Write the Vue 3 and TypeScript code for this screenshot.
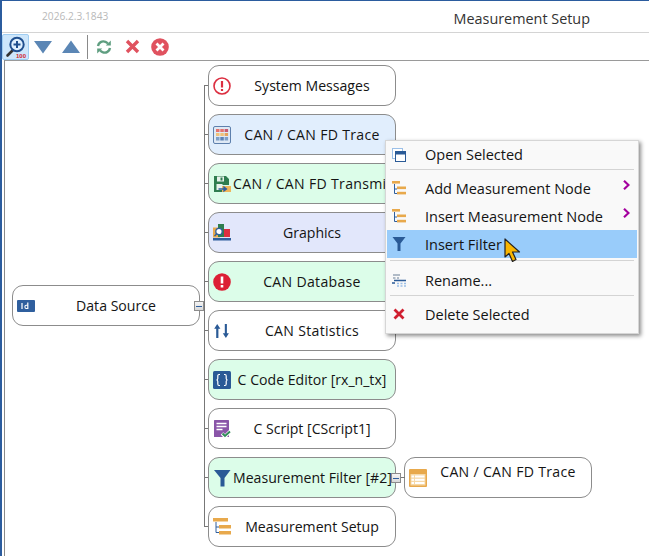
<script setup lang="ts">
type Kind = 'msg' | 'grid' | 'save' | 'graph' | 'db' | 'stats' | 'code' | 'script' | 'filter' | 'setup'
interface TreeNode { label: string; kind: Kind; tone: string }
const nodes: TreeNode[] = [
  { label: 'System Messages', kind: 'msg', tone: 'plain' },
  { label: 'CAN / CAN FD Trace', kind: 'grid', tone: 'blue' },
  { label: 'CAN / CAN FD Transmit', kind: 'save', tone: 'green' },
  { label: 'Graphics', kind: 'graph', tone: 'lilac' },
  { label: 'CAN Database', kind: 'db', tone: 'green' },
  { label: 'CAN Statistics', kind: 'stats', tone: 'plain' },
  { label: 'C Code Editor [rx_n_tx]', kind: 'code', tone: 'green' },
  { label: 'C Script [CScript1]', kind: 'script', tone: 'plain' },
  { label: 'Measurement Filter [#2]', kind: 'filter', tone: 'green' },
  { label: 'Measurement Setup', kind: 'setup', tone: 'plain' },
]
</script>

<template>
  <div class="win">
    <header class="title">
      <span class="version">2026.2.3.1843</span>
      <span class="name">Measurement Setup</span>
    </header>
    <div class="toolbar">
      <button class="tool active">
        <svg width="22" height="22" viewBox="0 0 22 22">
          <path d="M8 14L2.500 19.500" stroke="#333" stroke-width="2.600" stroke-linecap="round" />
          <circle cx="12" cy="8.500" r="6.700" fill="#dff0ff" stroke="#1f4f8f" stroke-width="2" />
          <path d="M12 5v7M8.500 8.500h7" stroke="#1f4f8f" stroke-width="2" />
          <text x="11" y="21.500" class="hundred">100</text>
        </svg>
      </button>
      <span class="tool"><svg width="18" height="14" viewBox="0 0 18 14"><path d="M0 1h18L9 13.500z" fill="#5b86b5" /></svg></span>
      <span class="tool"><svg width="18" height="14" viewBox="0 0 18 14"><path d="M0 13h18L9 .5z" fill="#5b86b5" /></svg></span>
      <span class="divider"></span>
      <span class="tool">
        <svg width="16" height="16" viewBox="0 0 16 16" fill="none" stroke="#5f9e80" stroke-width="2.400">
          <path d="M2 7C2.500 3.500 6 1.500 9.500 2.800c1 .4 1.800 1 2.400 1.800" />
          <path d="M14 9c-.5 3.500-4 5.500-7.500 4.200-1-.4-1.800-1-2.400-1.800" />
          <path d="M14.800 1.500v5h-5z" fill="#5f9e80" stroke="none" />
          <path d="M1.200 14.500v-5h5z" fill="#5f9e80" stroke="none" />
        </svg>
      </span>
      <span class="tool"><svg width="15" height="15" viewBox="0 0 15 15"><path d="M2 2l11 11M13 2L2 13" stroke="#e0525f" stroke-width="3.400" /></svg></span>
      <span class="tool">
        <svg width="18" height="18" viewBox="0 0 18 18"><circle cx="9" cy="9" r="8.800" fill="#e0525f" /><path d="M5.500 5.500l7 7M12.500 5.500l-7 7" stroke="#fff" stroke-width="2.800" /></svg>
      </span>
    </div>

    <main class="canvas">
      <div class="node root">
        <span class="icon">
          <svg width="18" height="12" viewBox="0 0 18 12"><rect width="18" height="12" rx="1" fill="#2f5f9e" /><path d="M5 3v6M10.800 2.500V9" stroke="#fff" stroke-width="1.200" /><path d="M10.800 5.200H9.200c-1 0-1.300.8-1.300 1.500s.4 1.800 1.300 1.800h1.600" fill="none" stroke="#fff" stroke-width="1.100" /></svg>
        </span>
        <span class="label">Data Source</span>
        <span class="handle"></span>
      </div>

      <div class="tree">
        <div v-for="n in nodes" :key="n.label" class="row">
          <div class="node" :class="n.tone">
            <span class="icon">
              <svg v-if="n.kind === 'msg'" width="18" height="18" viewBox="0 0 18 18"><circle cx="9" cy="9" r="8" fill="#fff" stroke="#dc2e40" stroke-width="1.600" /><path d="M9 4v6.500M9 12v2" stroke="#dc2e40" stroke-width="2.200" /></svg>
              <svg v-else-if="n.kind === 'grid'" width="18" height="18" viewBox="0 0 18 18">
                <rect x=".5" y=".5" width="17" height="17" rx="1.500" fill="#dfe9f5" stroke="#5e80ad" />
                <rect x="3" y="3" width="3.500" height="3" fill="#e4736d" /><rect x="7.300" y="3" width="3.500" height="3" fill="#e4736d" /><rect x="11.600" y="3" width="3.500" height="3" fill="#c65a72" />
                <rect x="3" y="7" width="3.500" height="3" fill="#efc27a" /><rect x="7.300" y="7" width="3.500" height="3" fill="#efc27a" /><rect x="11.600" y="7" width="3.500" height="3" fill="#e4a25c" />
                <rect x="3" y="11" width="3.500" height="3.500" fill="#7ea0c8" /><rect x="7.300" y="11" width="3.500" height="3.500" fill="#5c82b5" /><rect x="11.600" y="11" width="3.500" height="3.500" fill="#7ea0c8" />
              </svg>
              <svg v-else-if="n.kind === 'save'" width="18" height="18" viewBox="0 0 18 18">
                <path d="M1 1h12l3 3v6H9v7H1z" fill="#2e7d4f" />
                <rect x="4" y="1.500" width="7" height="5" fill="#e8f2ec" /><rect x="7.500" y="2.500" width="2" height="3" fill="#2e7d4f" />
                <rect x="3.500" y="9" width="6" height="6" fill="#e8f2ec" />
                <rect x="9" y="11" width="9" height="6" fill="#efb65a" /><path d="M5.500 14h7M11 12l2.500 2-2.500 2z" stroke="#2f5f9e" stroke-width="1.300" fill="#2f5f9e" />
              </svg>
              <svg v-else-if="n.kind === 'graph'" width="18" height="18" viewBox="0 0 18 18">
                <rect x="0" y="3.500" width="7" height="10" fill="#e8a94c" /><rect x="5" y="0" width="6" height="13" fill="#2e7d4f" /><rect x="11" y="5" width="6" height="8" fill="#dc2e40" />
                <circle cx="6" cy="7.500" r="3.200" fill="#fff" stroke="#2f5f9e" stroke-width="1.300" /><path d="M3.500 10L1.500 12" stroke="#2f5f9e" stroke-width="1.500" />
                <rect x="0" y="14" width="18" height="2.500" fill="#2f5f9e" />
              </svg>
              <svg v-else-if="n.kind === 'db'" width="18" height="18" viewBox="0 0 18 18"><circle cx="9" cy="9" r="8.800" fill="#dc1f35" /><path d="M9 3.500v7M9 12v2.500" stroke="#fff" stroke-width="2.600" /></svg>
              <svg v-else-if="n.kind === 'stats'" width="16" height="16" viewBox="0 0 16 16" fill="#2a5a96"><path d="M3.200 1L.2 5.800h2V15h2.200V5.800h2zM10.800 1V10.200h-2l3.100 4.800 3-4.800h-2V1z" /></svg>
              <svg v-else-if="n.kind === 'code'" width="18" height="18" viewBox="0 0 18 18"><rect width="18" height="18" rx="1.500" fill="#2a5a96" /><path d="M7 3.500H6c-1 0-1.200.7-1.200 1.500v2.500c0 .8-.4 1.300-1.200 1.500.8.200 1.200.7 1.200 1.500V13c0 .8.200 1.500 1.200 1.500h1M11 3.500h1c1 0 1.200.7 1.200 1.500v2.500c0 .8.400 1.300 1.200 1.500-.8.200-1.200.7-1.200 1.500V13c0 .8-.2 1.500-1.200 1.500h-1" fill="none" stroke="#fff" stroke-width="1.200" /></svg>
              <svg v-else-if="n.kind === 'script'" width="18" height="18" viewBox="0 0 18 18">
                <rect x="1" y="0" width="15" height="17" rx=".5" fill="#8a55a8" />
                <path d="M3.500 3.500h10M3.500 6.500h10M3.500 9.500h6" stroke="#fff" stroke-width="1.300" />
                <path d="M9 13.500l3 3 5-5" fill="none" stroke="#fff" stroke-width="3.500" /><path d="M9.500 13.500l2.500 2.500 5-4.500" fill="none" stroke="#2f8a58" stroke-width="1.900" />
              </svg>
              <svg v-else-if="n.kind === 'filter'" width="17" height="18" viewBox="0 0 17 18"><path d="M0 1h16.500L10.500 9v8.500H6.500V9z" fill="#2a5a96" /></svg>
              <svg v-else width="18" height="18" viewBox="0 0 18 18">
                <path d="M3 4v10.500h4M3 9h4" fill="none" stroke="#2f5f9e" />
                <rect x="0" y="0" width="15" height="3.500" fill="#e8a94c" /><rect x="6" y="7" width="12" height="3.500" fill="#e8a94c" /><rect x="6" y="13" width="12" height="3.500" fill="#e8a94c" />
              </svg>
            </span>
            <span class="label" :class="{ wide: n.label.startsWith('CAN') }">{{ n.label }}</span>
            <span v-if="n.kind === 'filter'" class="handle far"></span>
          </div>
          <div v-if="n.kind === 'filter'" class="node plain child">
            <span class="icon">
              <svg width="18" height="18" viewBox="0 0 18 18">
                <rect width="18" height="18" rx="1" fill="#e8a94c" /><rect x="1.500" y="5" width="15" height="11.500" fill="#f6d9a8" />
                <rect x="2.500" y="6.500" width="2.500" height="2" fill="#fff" /><rect x="6" y="6.500" width="9.500" height="2" fill="#fff" />
                <rect x="2.500" y="9.800" width="2.500" height="2" fill="#fff" /><rect x="6" y="9.800" width="9.500" height="2" fill="#fff" />
                <rect x="2.500" y="13" width="2.500" height="2" fill="#fff" /><rect x="6" y="13" width="9.500" height="2" fill="#fff" />
              </svg>
            </span>
            <span class="label up wide">CAN / CAN FD Trace</span>
          </div>
        </div>
      </div>
    </main>

    <nav class="menu">
      <div class="item open">
        <svg width="14" height="14" viewBox="0 0 14 14"><rect x=".5" y=".5" width="10" height="10" fill="#fff" stroke="#9cc0e8" /><rect x="3.500" y="3.500" width="10" height="10" fill="#fff" stroke="#2a5a96" /><rect x="3" y="3" width="11" height="3.500" fill="#2a5a96" /></svg>
        <span>Open Selected</span>
      </div>
      <div class="sep first"></div>
      <div class="item">
        <svg width="14" height="14" viewBox="0 0 14 14"><path d="M2.500 3v9.500H5M2.500 8H5" fill="none" stroke="#2f5f9e" /><rect y="0" width="8" height="2.600" fill="#e8a94c" /><rect x="5" y="5.500" width="9" height="2.600" fill="#e8a94c" /><rect x="5" y="10.800" width="9" height="2.600" fill="#e8a94c" /></svg>
        <span>Add Measurement Node</span>
        <svg class="chev" width="7" height="10" viewBox="0 0 7 10"><path d="M1 .8L5.500 5 1 9.200" fill="none" stroke="#a4009e" stroke-width="2.200" /></svg>
      </div>
      <div class="item">
        <svg width="14" height="14" viewBox="0 0 14 14"><path d="M2.500 3v9.500H5M2.500 8H5" fill="none" stroke="#2f5f9e" /><rect y="0" width="8" height="2.600" fill="#e8a94c" /><rect x="5" y="5.500" width="9" height="2.600" fill="#e8a94c" /><rect x="5" y="10.800" width="9" height="2.600" fill="#e8a94c" /></svg>
        <span>Insert Measurement Node</span>
        <svg class="chev" width="7" height="10" viewBox="0 0 7 10"><path d="M1 .8L5.500 5 1 9.200" fill="none" stroke="#a4009e" stroke-width="2.200" /></svg>
      </div>
      <div class="item hot">
        <svg width="14" height="14" viewBox="0 0 14 14"><path d="M.5 0h13L8.500 6.500V14h-3V6.500z" fill="#2a5a96" /></svg>
        <span>Insert Filter</span>
      </div>
      <div class="sep second"></div>
      <div class="item">
        <svg width="14" height="14" viewBox="0 0 14 14"><path d="M1 2h7M1 5h2.500M5 5h2" stroke="#6a7f96" stroke-width="1.200" /><path d="M2 7.500h12M0 10h3" stroke="#2a5a96" stroke-width="1.400" /><path d="M5 10.500h2M8.500 10.500h2M12 10.500h2M5 13h2M8.500 13h2M12 13h2" stroke="#9cc0e8" stroke-width="1.400" /></svg>
        <span>Rename...</span>
      </div>
      <div class="sep third"></div>
      <div class="item">
        <svg width="14" height="14" viewBox="0 0 14 14"><path d="M2.500 2.500l9 9M11.500 2.500l-9 9" stroke="#d01f30" stroke-width="2.800" /></svg>
        <span>Delete Selected</span>
      </div>
    </nav>

    <svg class="cursor" width="17" height="25" viewBox="0 0 17 25"><path d="M1 1v18l4-3.500 3.500 8 3.500-2-3.500-7.500H15.500z" fill="#f8b500" stroke="#222" stroke-width="1.200" stroke-linejoin="round" /></svg>
  </div>
</template>

<style>
html, body { margin: 0; background: #fff; overflow: hidden; }
</style>

<style scoped>
.win {
  position: relative;
  width: 649px;
  height: 556px;
  box-sizing: border-box;
  border-left: 2px solid #2b5c9e;
  border-top: 1px solid #2b5c9e;
  background: #fff;
  font-family: "Open Sans", "Noto Sans", sans-serif;
  color: #141414;
  font-size: 14.1px;
  overflow: hidden;
  display: flex;
  flex-direction: column;
}
.title {
  height: 31px;
  flex: none;
  box-sizing: border-box;
  display: flex;
  align-items: center;
  justify-content: space-between;
  padding: 0 59px 0 40px;
}
.version { color: #b9b9b9; font-size: 10.2px; margin-bottom: 2px; }
.name { font-size: 14.4px; color: #333; margin-top: 3px; }
.toolbar {
  height: 28px;
  flex: none;
  box-sizing: border-box;
  border-top: 1px solid #d4d4d4;
  display: flex;
  align-items: center;
}
.tool {
  width: 28px;
  height: 26px;
  box-sizing: border-box;
  display: flex;
  align-items: center;
  justify-content: center;
  flex: none;
  padding: 0;
  background: none;
  border: 0;
}
.tool.active {
  width: 27px;
  background: #cde6fb;
  border: 1px solid #9fcdf2;
  border-radius: 2px;
}
.hundred { font: bold 6px "Liberation Sans", sans-serif; fill: #d01f30; }
.divider { width: 1px; height: 24px; background: #8a8a8a; margin: 0 2px; flex: none; }
.canvas {
  flex: 1;
  min-height: 0;
  margin-left: 2px;
  border-top: 1px solid #9a9a9a;
  border-left: 1px solid #8a8a8a;
  padding: 4px 0 0 7px;
  display: flex;
  gap: 8px;
  align-items: flex-start;
}
.node {
  position: relative;
  width: 188px;
  height: 41px;
  box-sizing: border-box;
  flex: none;
  border: 1px solid #8c8c8c;
  border-radius: 11px;
  display: flex;
  align-items: center;
  padding: 0 4px;
  background: #fff;
}
.root { margin-top: 220px; }
.blue { background: #e1eefd; }
.green { background: #dcfde9; }
.lilac { background: #e2e7fb; }
.icon { width: 18px; height: 18px; flex: none; display: flex; align-items: center; justify-content: center; }
.label { flex: 1; text-align: center; white-space: nowrap; min-width: 0; padding-left: 2px; }
.label.wide { letter-spacing: 0.3px; }
.label.up { padding-bottom: 12px; }
.handle {
  position: absolute;
  right: -5px;
  top: 15px;
  width: 8px;
  height: 8px;
  background: linear-gradient(#f4f4f4, #d8d8d8);
  border: 1px solid #8c8c8c;
  z-index: 2;
}
.handle.far { right: -6px; }
.handle::after {
  content: "";
  position: absolute;
  left: 1px;
  right: 1px;
  top: 4px;
  height: 1px;
  background: #2f5f9e;
}
.tree {
  position: relative;
  display: flex;
  flex-direction: column;
  gap: 8px;
}
.tree::before {
  content: "";
  position: absolute;
  left: -4px;
  top: 20px;
  bottom: 20px;
  width: 1px;
  background: #777;
}
.row { position: relative; display: flex; gap: 8px; }
.row::before {
  content: "";
  position: absolute;
  left: -4px;
  top: 20px;
  width: 4px;
  height: 1px;
  background: #777;
}
.child::before {
  content: "";
  position: absolute;
  left: -8px;
  top: 19px;
  width: 8px;
  height: 1px;
  background: #777;
}
.menu {
  position: absolute;
  left: 383px;
  top: 139px;
  width: 254px;
  box-sizing: border-box;
  background: #f9f9f9;
  border: 1px solid #d6d6d6;
  padding: 0 1px 5px;
  box-shadow: 2px 2px 4px rgba(0, 0, 0, 0.45);
  z-index: 5;
  font-size: 14.5px;
}
.item {
  position: relative;
  height: 28px;
  display: flex;
  align-items: center;
  padding-left: 5px;
  gap: 19px;
}
.item.open { height: 27px; margin-bottom: 1px; }
.item > svg:first-child { flex: none; }
.hot { background: #99ccfa; }
.chev { position: absolute; left: 236px; top: 6px; }
.sep { height: 1px; background: #d4d4d4; margin: 0 3px; }
.sep.first { margin-bottom: 4px; }
.sep.second { margin-top: 2px; margin-bottom: 5px; }
.sep.third { margin-top: 1px; margin-bottom: 4px; }
.cursor { position: absolute; left: 502px; top: 237px; z-index: 6; }
</style>
